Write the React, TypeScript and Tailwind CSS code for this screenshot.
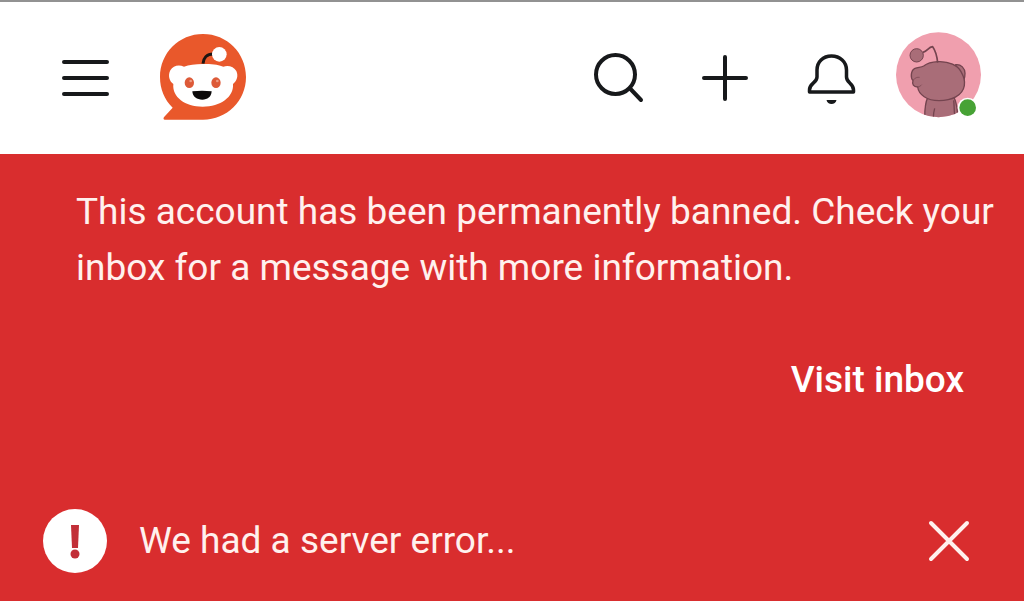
const iconButton = "h-12 w-12 shrink-0 text-[#17191b]";

function RedditLogo() {
  return (
    <svg viewBox="30 27 258 264" className="h-[88px] w-[86px]" aria-hidden="true">
      <path
        d="M159 27C231 27 288 84 288 156C288 228 231 284 159 284L45 284C40 284 39 279 43 275L68 248C43 224 30 192 30 156C30 84 87 27 159 27Z"
        fill="#e9582b"
      />
      <path
        d="M158 117C189 116 208 120 220 125C234 119 252 125 259 138C266 154 260 168 249 177C252 216 211 245 158 245C105 245 66 216 70 177C58 169 53 152 61 136C69 122 86 118 102 125C116 120 136 117 158 117Z"
        fill="#fff"
      />
      <path d="M159 116C160 100 170 87 190 87" fill="none" stroke="#1d1512" strokeWidth="9" />
      <circle cx="208" cy="88" r="22" fill="#fff" />
      <path d="M127 199Q156 195 185 199C184 216 172 224 157 224C141 224 128 216 127 199Z" fill="#0b0909" />
      <ellipse cx="118" cy="173" rx="14" ry="16" fill="#dd5a38" />
      <ellipse cx="198" cy="173" rx="14" ry="16" fill="#dd5a38" />
      <circle cx="122" cy="168" r="4" fill="#ee9c84" />
      <circle cx="202" cy="168" r="4" fill="#ee9c84" />
    </svg>
  );
}

function Avatar() {
  return (
    <svg viewBox="33 35 255 276" className="h-[92px] w-[85px] overflow-visible" aria-hidden="true">
      <defs>
        <clipPath id="avatar-circle">
          <circle cx="160.5" cy="163" r="127.5" />
        </clipPath>
      </defs>
      <circle cx="160.5" cy="163" r="127.5" fill="#f09fae" />
      <g clipPath="url(#avatar-circle)" stroke="#74444f" strokeWidth="4" strokeLinejoin="round">
        <path d="M128 232C119 250 119 270 119 296L220 296C216 276 218 252 207 232Z" fill="#a96d78" />
        <path d="M149 264C146 274 145 284 145 296M206 240C208 254 207 270 209 285" fill="none" />
        <path d="M212 133C228 131 240 144 240 159C240 176 235 186 226 188Z" fill="#a96d78" />
        <path
          d="M158 124C193 122 218 136 228 154C235 166 241 180 238 196C233 226 200 241 162 241C126 241 101 223 98 200C86 199 80 192 84 181C76 172 77 150 90 144C99 140 108 142 116 137C128 128 140 125 158 124Z"
          fill="#a96d78"
        />
        <path d="M84 180C90 172 97 170 104 171M98 200C103 199 107 197 110 193" fill="none" strokeWidth="2" />
        <path d="M114 96C128 92 130 80 143 79C151 90 156 107 158 127" fill="none" strokeWidth="5" />
        <circle cx="95" cy="105" r="20" fill="#a96d78" strokeWidth="3" />
      </g>
      <circle cx="248" cy="262" r="30" fill="#fff" />
      <circle cx="248" cy="262" r="25" fill="#47a235" />
    </svg>
  );
}

function Header() {
  return (
    <header className="flex h-[154px] items-center justify-between border-t-2 border-[#929292] bg-white pr-[43px] pl-[62px]">
      <div className="flex items-center gap-[50px]">
        <button type="button" aria-label="Open menu" className={iconButton}>
          <svg viewBox="0 0 48 48" className="h-12 w-12" fill="none" stroke="currentColor" strokeWidth="4" strokeLinecap="round">
            <path d="M2 8h43M2 24h43M2 40h43" />
          </svg>
        </button>
        <a href="#" aria-label="Home">
          <RedditLogo />
        </a>
      </div>

      <div className="flex items-center gap-[41px]">
        <nav className="flex items-center gap-[58px]">
          <button type="button" aria-label="Search" className={iconButton}>
            <svg viewBox="0 0 48 48" className="h-12 w-12 overflow-visible" fill="none" stroke="currentColor" strokeWidth="4" strokeLinecap="round">
              <circle cx="20.5" cy="20.5" r="19.5" />
              <path d="M35.5 35L46 46" />
            </svg>
          </button>
          <button type="button" aria-label="Create post" className={iconButton}>
            <svg viewBox="0 0 48 48" className="h-12 w-12" fill="none" stroke="currentColor" strokeWidth="4" strokeLinecap="round">
              <path d="M24 3v42M3 24h42" />
            </svg>
          </button>
          <button type="button" aria-label="Notifications" className={iconButton}>
            <svg viewBox="0 0 48 48" className="h-12 w-12 overflow-visible" fill="none" stroke="currentColor" strokeWidth="3.5" strokeLinejoin="round">
              <path d="M24.5 2C16 2 10 8 10 16V23C10 29 2.500 29 2.500 36V38H46.500V36C46.500 29 39.500 29 39.500 23V16C39.500 8 33 2 24.500 2Z" />
              <path d="M19.500 46H29.500C29 48.500 27 50 24.500 50C22 50 20 48.500 19.500 46Z" fill="currentColor" stroke="none" />
            </svg>
          </button>
        </nav>
        <button type="button" aria-label="Account">
          <Avatar />
        </button>
      </div>
    </header>
  );
}

export default function App() {
  return (
    <div className="min-h-screen bg-[#d92d2e] font-['Roboto',sans-serif] text-[37px] leading-[56px] text-[#fff1ee]">
      <Header />

      <section className="pt-[30px] pr-5 pl-[76px]">
        <p>This account has been permanently banned. Check your inbox for a message with more information.</p>
        <div className="mt-14 flex justify-end pr-10">
          <a href="#" className="font-medium text-white">
            Visit inbox
          </a>
        </div>
      </section>

      <div role="alert" className="mt-[101px] flex items-center pr-[53px] pb-7 pl-[43px]">
        <svg viewBox="0 0 64 64" className="h-16 w-16 shrink-0" aria-hidden="true">
          <circle cx="32" cy="32" r="32" fill="#fff" />
          <path d="M28 16H36L35 39H29Z" fill="#c22f38" />
          <circle cx="32" cy="45" r="4.5" fill="#c22f38" />
        </svg>
        <p className="ml-8 flex-1">We had a server error...</p>
        <button type="button" aria-label="Dismiss" className="h-11 w-11 shrink-0">
          <svg viewBox="0 0 44 44" className="h-11 w-11" fill="none" stroke="currentColor" strokeWidth="4" strokeLinecap="round">
            <path d="M4 4L40 40M40 4L4 40" />
          </svg>
        </button>
      </div>
    </div>
  );
}
